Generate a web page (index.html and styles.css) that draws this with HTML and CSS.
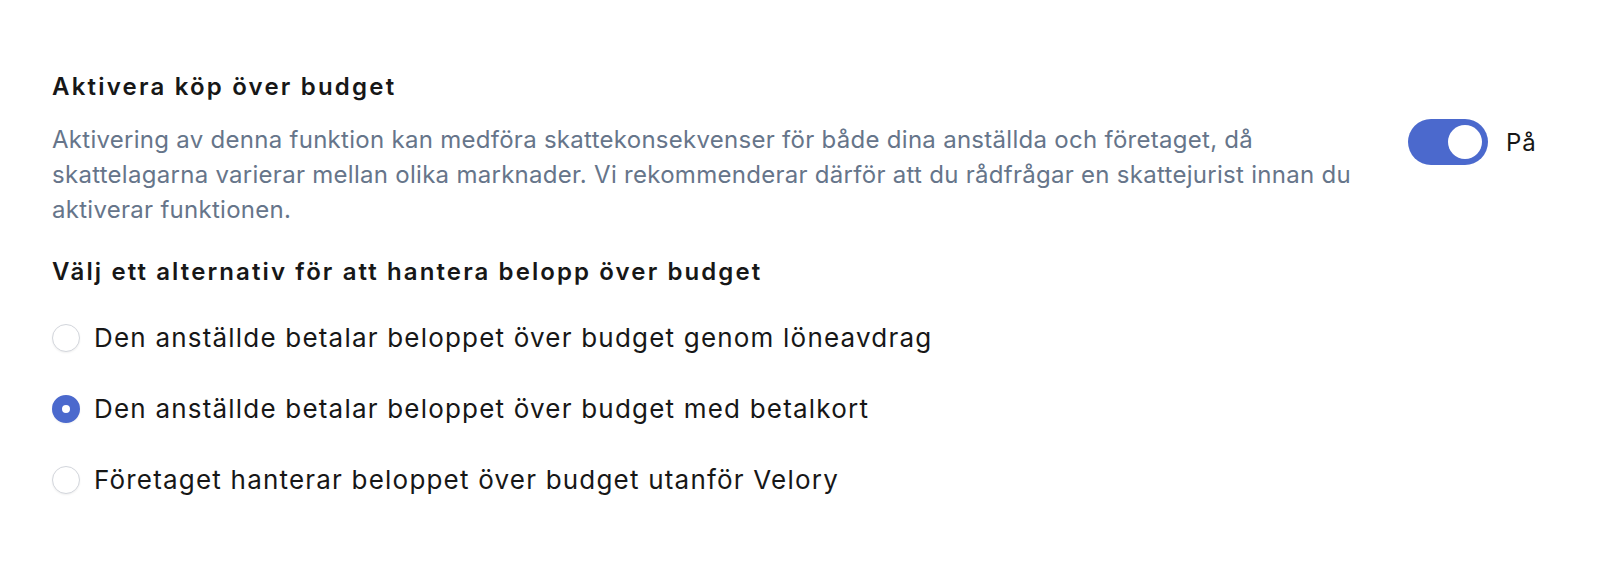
FILE: index.html
```html
<!DOCTYPE html>
<html lang="sv">
<head>
  <meta charset="UTF-8" />
  <meta name="viewport" content="width=device-width, initial-scale=1.0"/>
  <title>Köp över budget</title>
  <link rel="stylesheet" href="styles.css">
</head>
<body>

  <div class="settings">
    <!-- Toggle row -->
    <div class="setting-row">
      <div class="setting-text">
        <h3 class="setting-title">Aktivera köp över budget</h3>
        <p class="setting-desc">Aktivering av denna funktion kan medföra skattekonsekvenser för både dina anställda och företaget, då skattelagarna varierar mellan olika marknader. Vi rekommenderar därför att du rådfrågar en skattejurist innan du aktiverar funktionen.</p>
      </div>
      <label class="switch-group">
        <span class="switch on"><span class="knob"></span></span>
        <span class="switch-label">På</span>
      </label>
    </div>

    <!-- Options -->
    <h3 class="setting-title options-title">Välj ett alternativ för att hantera belopp över budget</h3>
    <div class="options">
      <label class="option">
        <span class="radio"></span>
        <span>Den anställde betalar beloppet över budget genom löneavdrag</span>
      </label>
      <label class="option">
        <span class="radio checked"></span>
        <span>Den anställde betalar beloppet över budget med betalkort</span>
      </label>
      <label class="option">
        <span class="radio"></span>
        <span>Företaget hanterar beloppet över budget utanför Velory</span>
      </label>
    </div>
  </div>

</body>
</html>
```

FILE: styles.css
```css
body {
  margin: 0;
  background: #fff;
  font-family: Inter, "Noto Sans", sans-serif;
  color: #171717;
}
.settings {
  padding: 71px 52px 0 52px;
}
.setting-row {
  display: flex;
  align-items: flex-start;
}
.setting-text {
  width: 1340px;
}
.setting-title {
  margin: 0;
  font-size: 24px;
  line-height: 32px;
  font-weight: 600;
  letter-spacing: 2.2px;
  color: #171717;
}
.setting-desc {
  margin: 19px 0 0 0;
  font-size: 24px;
  line-height: 35px;
  letter-spacing: 0.28px;
  color: #66758a;
}
.switch-group {
  display: flex;
  align-items: center;
  gap: 18px;
  margin-top: 48px;
  margin-left: 16px;
}
.switch {
  width: 80px;
  height: 46px;
  border-radius: 23px;
  background: #d4d7dd;
  box-sizing: border-box;
  padding: 6px;
  display: flex;
}
.switch.on {
  background: #4b69cd;
  justify-content: flex-end;
}
.knob {
  width: 34px;
  height: 34px;
  border-radius: 50%;
  background: #fff;
}
.switch-label {
  font-size: 24px;
  letter-spacing: 1px;
  color: #171717;
}
.options-title {
  margin-top: 29px;
  letter-spacing: 2.1px;
}
.options {
  margin-top: 32px;
  display: flex;
  flex-direction: column;
  gap: 35px;
}
.option {
  display: flex;
  align-items: center;
  gap: 14px;
  font-size: 26px;
  line-height: 36px;
  letter-spacing: 1.2px;
  color: #171717;
}
.radio {
  width: 28px;
  height: 28px;
  box-sizing: border-box;
  border-radius: 50%;
  border: 1.5px solid #d3d6dc;
  background: #fff;
  box-shadow: 0 1px 2px rgba(0,0,0,0.06);
}
.radio.checked {
  border: 10px solid #4b69cd;
}
```
